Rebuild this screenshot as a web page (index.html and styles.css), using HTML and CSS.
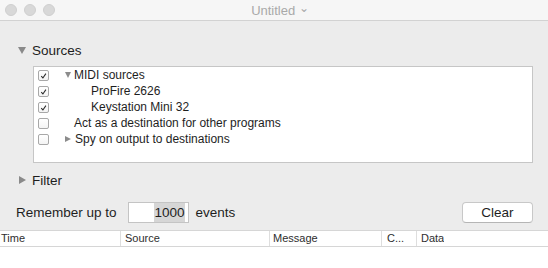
FILE: index.html
```html
<!DOCTYPE html>
<html lang="en">
<head>
    <meta charset="UTF-8">
    <title>Untitled</title>
    <link rel="stylesheet" href="styles.css">
</head>
<body>
    <div class="titlebar">
        <div class="lights">
            <span class="light"></span>
            <span class="light"></span>
            <span class="light"></span>
        </div>
        <div class="title">Untitled <span class="chev">&#8964;</span></div>
    </div>

    <div class="section-head">
        <span class="tri tri-open"></span>Sources
    </div>

    <div class="source-list">
        <div class="row">
            <span class="check on"><svg viewBox="0 0 12 12"><path d="M3 6.2 L5.2 8.6 L9.2 2.8" /></svg></span>
            <span class="tri-small tri-open small-open"></span>
            <span>MIDI sources</span>
        </div>
        <div class="row">
            <span class="check on"><svg viewBox="0 0 12 12"><path d="M3 6.2 L5.2 8.6 L9.2 2.8" /></svg></span>
            <span class="indent2">ProFire 2626</span>
        </div>
        <div class="row">
            <span class="check on"><svg viewBox="0 0 12 12"><path d="M3 6.2 L5.2 8.6 L9.2 2.8" /></svg></span>
            <span class="indent2">Keystation Mini 32</span>
        </div>
        <div class="row">
            <span class="check"></span>
            <span class="indent1">Act as a destination for other programs</span>
        </div>
        <div class="row">
            <span class="check"></span>
            <span class="tri-small small-closed"></span>
            <span>Spy on output to destinations</span>
        </div>
    </div>

    <div class="section-head filter-head">
        <span class="tri tri-closed"></span>Filter
    </div>

    <div class="remember">
        <span>Remember up to</span>
        <span class="count"><span class="sel">1000</span></span>
        <span>events</span>
        <button class="clear">Clear</button>
    </div>

    <div class="table">
        <div class="thead">
            <div class="col c-time">Time</div>
            <div class="col c-source">Source</div>
            <div class="col c-msg">Message</div>
            <div class="col c-chan">C...</div>
            <div class="col c-data">Data</div>
        </div>
    </div>
</body>
</html>
```

FILE: styles.css
```css
body {
    margin: 0;
    width: 548px;
    height: 268px;
    overflow: hidden;
    background-color: #ececec;
    font-family: "Liberation Sans", Arial, sans-serif;
    color: #1e1e1e;
}

.titlebar {
    height: 20px;
    background-color: #f6f6f6;
    border-bottom: 1px solid #d2d2d2;
    display: flex;
    align-items: center;
    position: relative;
}

.lights {
    display: flex;
    gap: 7px;
    padding-left: 5px;
}

.light {
    width: 12px;
    height: 12px;
    border-radius: 50%;
    background-color: #d8d8d8;
    border: 0.5px solid #cfcfcf;
    box-sizing: border-box;
}

.title {
    position: absolute;
    left: 0;
    right: 0;
    text-align: center;
    font-size: 13px;
    color: #a9a9a9;
    padding-left: 12px;
}

.chev {
    font-size: 12px;
    position: relative;
    top: -3px;
}

.section-head {
    margin-top: 21px;
    height: 16px;
    font-size: 13.5px;
    display: flex;
    align-items: center;
    padding-left: 18px;
}

.tri {
    width: 0;
    height: 0;
    margin-right: 6px;
}

.tri-open {
    border-left: 4px solid transparent;
    border-right: 4px solid transparent;
    border-top: 7px solid #8a8a8a;
}

.tri-closed {
    border-top: 4px solid transparent;
    border-bottom: 4px solid transparent;
    border-left: 7px solid #8a8a8a;
    margin-left: 1px;
}

.source-list {
    margin: 8px 15px 0 33px;
    height: 95px;
    background-color: #fff;
    border: 1px solid #c6c6c6;
    font-size: 12px;
}

.row {
    height: 16px;
    display: flex;
    align-items: center;
    padding-left: 4px;
}

.check {
    width: 11px;
    height: 11px;
    box-sizing: border-box;
    border: 1px solid #a8a8a8;
    border-radius: 2px;
    background: linear-gradient(#fff, #f4f4f4);
    margin-right: 25px;
    display: flex;
}

.check svg {
    width: 10px;
    height: 10px;
    fill: none;
    stroke: #2a2a2a;
    stroke-width: 1.4;
}

.tri-small {
    width: 0;
    height: 0;
    margin-left: -9px;
    margin-right: 3px;
}

.small-open {
    border-left: 3.5px solid transparent;
    border-right: 3.5px solid transparent;
    border-top: 6px solid #8c8c8c;
}

.small-closed {
    border-top: 3.5px solid transparent;
    border-bottom: 3.5px solid transparent;
    border-left: 6px solid #8c8c8c;
    margin-right: 4px;
}

.indent2 {
    padding-left: 17px;
}

.filter-head {
    margin-top: 9px;
}

.remember {
    margin-top: 13px;
    display: flex;
    align-items: center;
    padding: 0 15px 0 16px;
    font-size: 13.5px;
    height: 22px;
}

.count {
    width: 61px;
    height: 21px;
    box-sizing: border-box;
    background-color: #fff;
    border: 1px solid #c4c4c4;
    margin: 0 7px 0 11px;
    display: flex;
    justify-content: flex-end;
    align-items: center;
    padding-right: 3px;
}

.sel {
    background-color: #d6d6d6;
    padding: 1px 0 1px 1px;
    line-height: 17px;
}

.clear {
    margin-left: auto;
    width: 71px;
    height: 21px;
    font-family: "Liberation Sans", Arial, sans-serif;
    font-size: 13.5px;
    color: #1e1e1e;
    background-color: #fff;
    border: 1px solid #c8c8c8;
    border-bottom-color: #b5b5b5;
    border-radius: 4px;
    padding: 0;
}

.table {
    margin-top: 7px;
    background-color: #fff;
    height: 40px;
    border-top: 1px solid #d6d6d6;
}

.thead {
    display: flex;
    height: 15px;
    border-bottom: 1px solid #d6d6d6;
    font-size: 11px;
    color: #2e2e2e;
    align-items: center;
}

.col {
    height: 15px;
    line-height: 15px;
    box-sizing: border-box;
    padding-left: 3px;
    border-right: 1px solid #dedede;
    white-space: nowrap;
    overflow: hidden;
}

.c-time { width: 121px; padding-left: 1px; }
.c-source { width: 149px; padding-left: 4px; }
.c-msg { width: 112px; padding-left: 3px; }
.c-chan { width: 35px; padding-left: 5px; }
.c-data { border-right: none; padding-left: 4px; }
```
